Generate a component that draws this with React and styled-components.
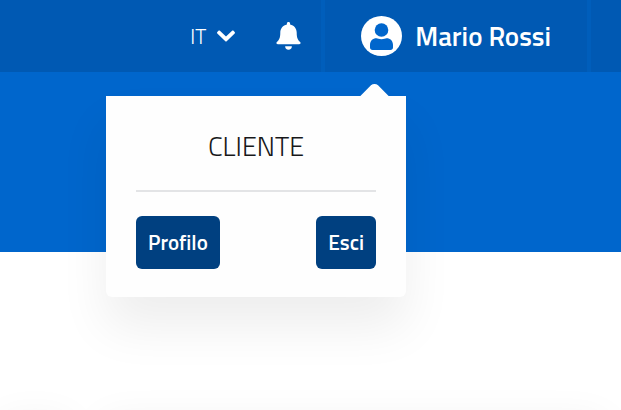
import React from "react";
import styled, { createGlobalStyle } from "styled-components";

const GlobalStyle = createGlobalStyle`
  *, *::before, *::after { box-sizing: border-box; }
  body {
    margin: 0;
    background: #fff;
    color: #17181a;
    font-family: "Titillium Web", Roboto, "Open Sans", sans-serif;
  }
  button, select { font-family: inherit; }
`;

const Page = styled.div`
  display: flex;
  flex-direction: column;
  height: 100vh;
  overflow: hidden;
`;

const Header = styled.header`
  display: flex;
  justify-content: flex-end;
  flex: none;
  height: 72px;
  padding-right: 30px;
  background: #0059b3;
  color: #fff;
`;

const Tools = styled.div`
  display: flex;
  align-items: center;
  gap: 40px;
  padding-right: 20px;
`;

const Language = styled.label`
  display: flex;
  align-items: center;
  gap: 8px;
`;

const LanguageSelect = styled.select`
  appearance: none;
  width: 18px;
  padding: 0;
  border: 0;
  background: transparent;
  color: #fff;
  font-size: 21px;
  font-weight: 300;
  line-height: 24px;
`;

const IconButton = styled.button`
  display: flex;
  padding: 0;
  border: 0;
  background: transparent;
  color: inherit;
`;

const Account = styled.div`
  position: relative;
  display: flex;
  border: solid #005ebb;
  border-width: 0 4px;
`;

const AccountButton = styled.button`
  display: flex;
  align-items: center;
  gap: 13px;
  padding: 0 36px;
  border: 0;
  background: transparent;
  color: #fff;
  font-size: 27px;
  font-weight: 600;
  white-space: nowrap;
`;

const AccountName = styled.span`
  padding-bottom: 2px;
`;

const Popover = styled.section`
  position: absolute;
  z-index: 1;
  top: 96px;
  right: 181px;
  width: 300px;
  padding: 30px 30px 28px;
  border-radius: 0 0 6px 6px;
  background: #fefefe;
  box-shadow: 0 30px 50px rgba(0, 0, 0, 0.07);
  color: #17181a;

  &::before {
    content: "";
    position: absolute;
    top: -9px;
    right: 19px;
    width: 25px;
    height: 25px;
    border-radius: 5px;
    background: #fefefe;
    transform: rotate(45deg);
  }
`;

const Role = styled.h2`
  position: relative;
  margin: 0;
  padding-bottom: 24px;
  border-bottom: 2px solid #e3e4e6;
  font-size: 27px;
  font-weight: 300;
  line-height: 40px;
  text-align: center;
`;

const Actions = styled.div`
  display: flex;
  justify-content: space-between;
  padding-top: 24px;
`;

const ActionButton = styled.button`
  height: 53px;
  padding: 0 12px 2px;
  border: 0;
  border-radius: 6px;
  background: #004080;
  color: #fff;
  font-size: 21px;
  font-weight: 600;
`;

const Banner = styled.div`
  flex: none;
  height: 180px;
  background: #0066cc;
`;

const Cards = styled.main`
  display: grid;
  flex: none;
  grid-template-columns: 70px 1fr;
  gap: 32px;
  padding: 168px 16px 0 0;
`;

const Card = styled.article`
  height: 120px;
  background: #fff;
  box-shadow: 0 0 40px rgba(0, 0, 0, 0.06);
`;

const Chevron = () => (
  <svg width="20" height="14" viewBox="0 0 20 14" fill="currentColor" aria-hidden="true">
    <path d="M1.300 3.100L2.500 1.700c.4-.4 1-.4 1.400 0L10 7.600l6.100-5.900c.4-.4 1-.4 1.400 0l1.200 1.400c.4.4.4 1 0 1.400l-8 7.800c-.4.4-1 .4-1.400 0l-8-7.800c-.4-.4-.4-1 0-1.400z" />
  </svg>
);

const Bell = () => (
  <svg width="25" height="28" viewBox="0 0 25 28" fill="currentColor" aria-hidden="true">
    <path d="M12.500 0c-1 0-1.600.7-1.600 1.600v.9C7 3.300 4.300 6.500 4.300 10.500c0 5.600-1.200 7.400-3.400 9.500-1 .9-.4 2.200.9 2.200h21.400c1.300 0 1.900-1.300.9-2.200-2.200-2.100-3.400-3.900-3.400-9.500 0-4-2.700-7.200-6.600-8v-.9C14.100.7 13.500 0 12.500 0z" />
    <path d="M9.100 24.200h6.800c0 2-1.400 3.500-3.400 3.500s-3.400-1.500-3.400-3.500z" />
  </svg>
);

const Avatar = () => (
  <svg width="41" height="40" viewBox="0 0 41 40" aria-hidden="true">
    <ellipse cx="20.500" cy="20" rx="20.500" ry="20" fill="#fff" />
    <circle cx="20.500" cy="14" r="6.800" fill="#0066cc" />
    <path d="M9 31.500v-2.700c0-4 2.700-6.600 6.500-6.600 1.200 0 2.500 1 5 1s3.800-1 5-1c3.800 0 6.500 2.600 6.500 6.600v2.700c0 1.500-1 2.500-2.500 2.500h-18C10 34 9 33 9 31.500z" fill="#0066cc" />
  </svg>
);

export default function App() {
  return (
    <Page>
      <GlobalStyle />
      <Header>
        <Tools>
          <Language>
            <LanguageSelect aria-label="Lingua" defaultValue="it">
              <option value="it">IT</option>
            </LanguageSelect>
            <Chevron />
          </Language>
          <IconButton type="button" aria-label="Notifiche">
            <Bell />
          </IconButton>
        </Tools>
        <Account>
          <AccountButton type="button" aria-expanded="true">
            <Avatar />
            <AccountName>Mario Rossi</AccountName>
          </AccountButton>
          <Popover>
            <Role>CLIENTE</Role>
            <Actions>
              <ActionButton type="button">Profilo</ActionButton>
              <ActionButton type="button">Esci</ActionButton>
            </Actions>
          </Popover>
        </Account>
      </Header>
      <Banner />
      <Cards>
        <Card />
        <Card />
      </Cards>
    </Page>
  );
}
